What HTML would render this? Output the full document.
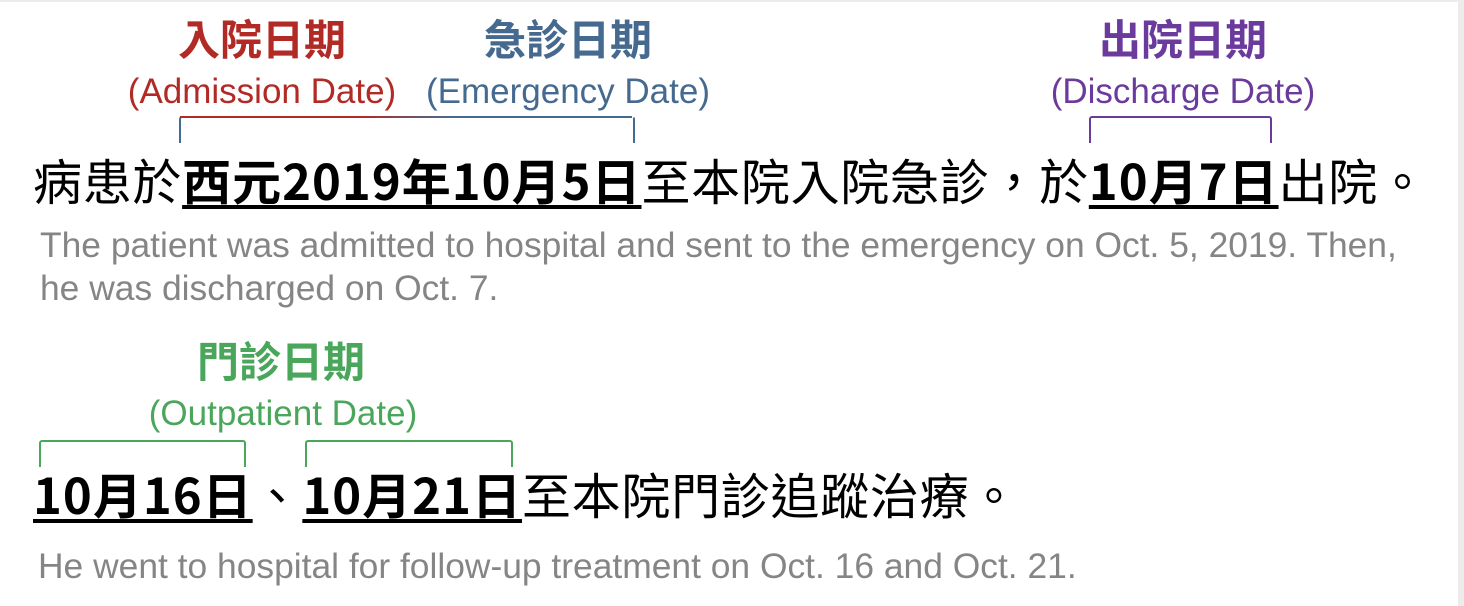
<!DOCTYPE html>
<html><head><meta charset="utf-8"><style>
body{margin:0;width:1464px;height:606px;background:#fff;position:relative;overflow:hidden;font-family:"Liberation Sans","Noto Sans CJK TC",sans-serif}
.a{position:absolute;white-space:nowrap;line-height:1}
.t{font-family:"Liberation Sans","Noto Sans CJK TC",sans-serif;font-weight:bold;font-size:42px;transform:translateX(-50%)}
.e{font-size:35px;transform:translateX(-50%)}
.m{font-family:"Noto Sans CJK TC",sans-serif;font-size:49px;color:#000;letter-spacing:0.7px}
.m b{font-weight:bold;letter-spacing:1px;text-decoration:underline;text-decoration-thickness:4px;text-underline-offset:5px;text-decoration-skip-ink:none}
.g{font-size:35.4px;color:#858585}
.br{position:absolute;border:2px solid;border-bottom:none;border-radius:3px 3px 0 0}
</style></head><body>
<div style="position:absolute;left:0;top:0;width:1464px;height:2px;background:#ececec"></div>
<div style="position:absolute;right:0;top:0;width:6px;height:606px;background:#ececec"></div>

<div class="a t" style="left:262px;top:20px;color:#b22a25">入院日期</div>
<div class="a e" style="left:262px;top:74px;color:#b22a25">(Admission Date)</div>
<div class="a t" style="left:568px;top:20px;color:#466a8f">急診日期</div>
<div class="a e" style="left:568px;top:74px;color:#466a8f">(Emergency Date)</div>
<div class="a t" style="left:1183px;top:20px;color:#6a3a9c">出院日期</div>
<div class="a e" style="left:1183px;top:74px;color:#6a3a9c">(Discharge Date)</div>

<div class="br" style="left:179px;top:116px;width:452px;height:25px;border-color:#b22a25 #466a8f;border-top-color:transparent"></div>
<div style="position:absolute;left:180px;top:116px;width:452px;height:2px;background:linear-gradient(90deg,#b22a25 40%,#466a8f 60%)"></div>
<div class="br" style="left:1089px;top:116px;width:179px;height:25px;border-color:#6a3a9c"></div>

<div class="a m" style="left:33px;top:155px">病患於<b>西元2019年10月5日</b>至本院入院急診，於<b>10月7日</b>出院。</div>
<div class="a g" style="left:40px;top:228px">The patient was admitted to hospital and sent to the emergency on Oct. 5, 2019. Then,</div>
<div class="a g" style="left:40px;top:271px">he was discharged on Oct. 7.</div>

<div class="a t" style="left:281px;top:342px;color:#4aa65a">門診日期</div>
<div class="a e" style="left:283px;top:396px;color:#4aa65a">(Outpatient Date)</div>
<div class="br" style="left:39px;top:440px;width:203px;height:25px;border-color:#4aa65a"></div>
<div class="br" style="left:305px;top:440px;width:204px;height:25px;border-color:#4aa65a"></div>

<div class="a m" style="left:33px;top:469px"><b>10月16日</b>、<b>10月21日</b>至本院門診追蹤治療。</div>
<div class="a g" style="left:38px;top:549px">He went to hospital for follow-up treatment on Oct. 16 and Oct. 21.</div>
</body></html>
